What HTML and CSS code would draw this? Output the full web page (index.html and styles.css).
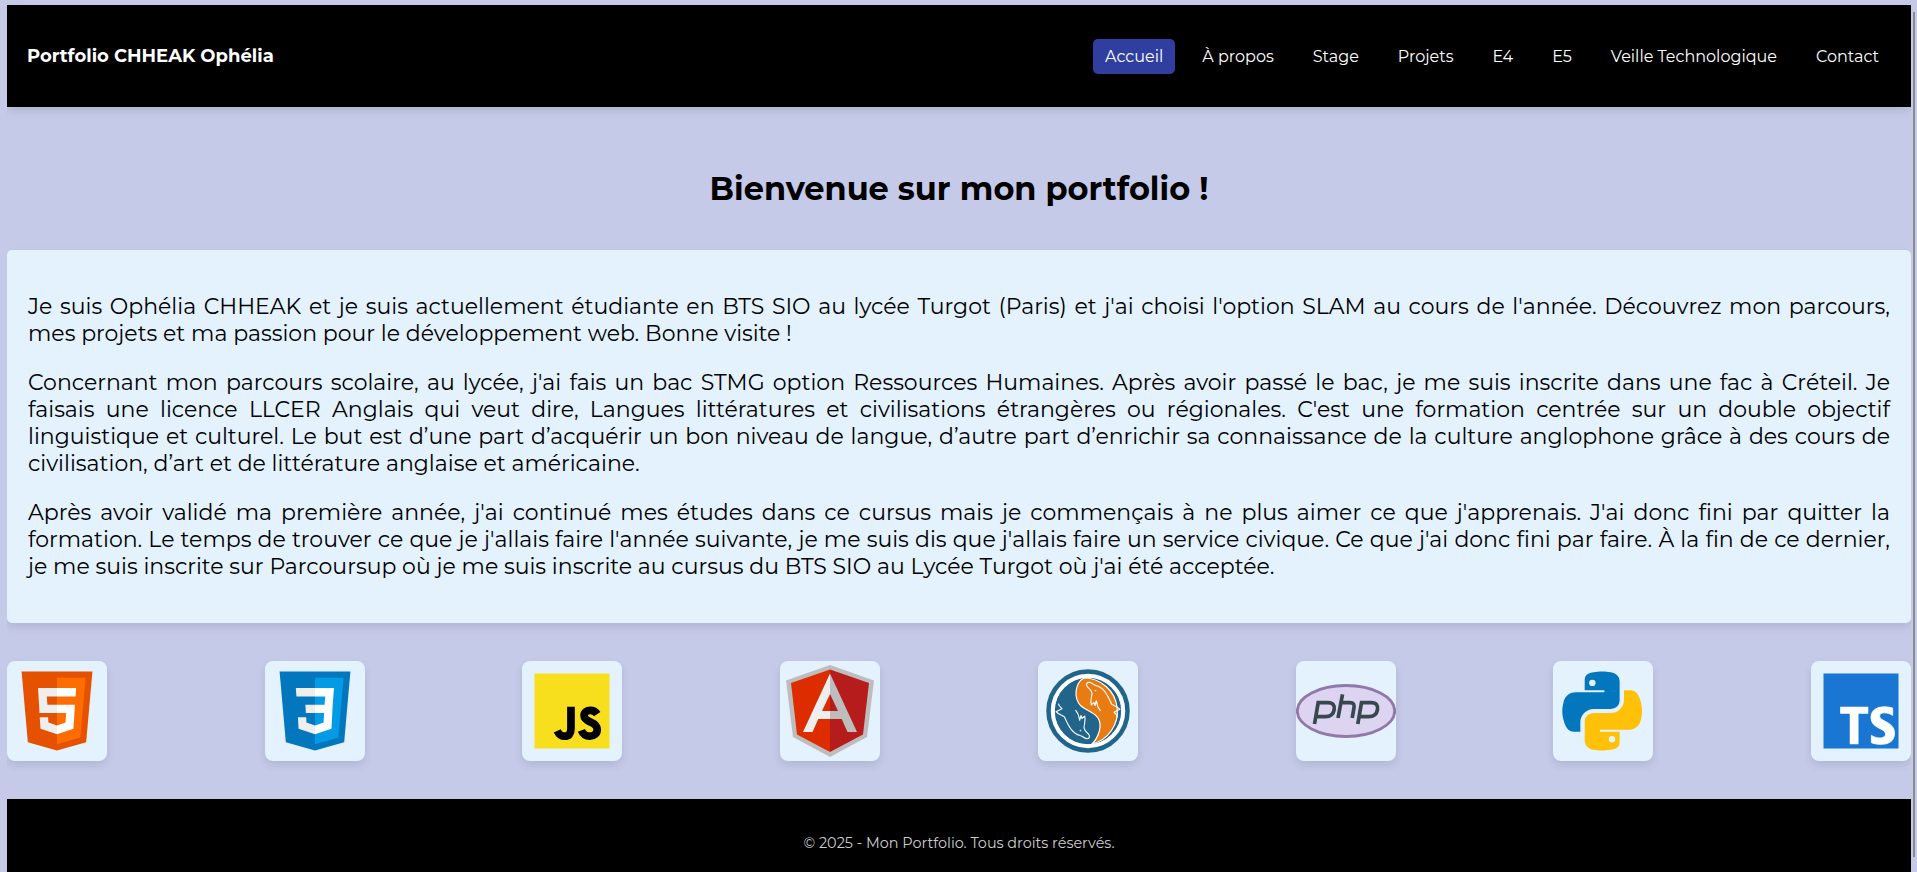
FILE: index.html
```html
<!DOCTYPE html>
<html lang="fr">
<head>
<meta charset="utf-8">
<title>Portfolio CHHEAK Ophélia</title>
<link rel="stylesheet" href="styles.css">
</head>
<body>
<header class="header">
  <div class="brand">Portfolio CHHEAK Ophélia</div>
  <nav class="nav">
    <a class="link active">Accueil</a>
    <a class="link">À propos</a>
    <a class="link">Stage</a>
    <a class="link">Projets</a>
    <a class="link">E4</a>
    <a class="link">E5</a>
    <a class="link">Veille Technologique</a>
    <a class="link">Contact</a>
  </nav>
</header>
<main>
  <h1 class="title">Bienvenue sur mon portfolio !</h1>
  <section class="intro">
    <p class="para">
      <span class="line">Je suis Ophélia CHHEAK et je suis actuellement étudiante en BTS SIO au lycée Turgot (Paris) et j'ai choisi l'option SLAM au cours de l'année. Découvrez mon parcours,</span>
      <span class="line end">mes projets et ma passion pour le développement web. Bonne visite !</span>
    </p>
    <p class="para">
      <span class="line">Concernant mon parcours scolaire, au lycée, j'ai fais un bac STMG option Ressources Humaines. Après avoir passé le bac, je me suis inscrite dans une fac à Créteil. Je</span>
      <span class="line">faisais une licence LLCER Anglais qui veut dire, Langues littératures et civilisations étrangères ou régionales. C'est une formation centrée sur un double objectif</span>
      <span class="line">linguistique et culturel. Le but est d’une part d’acquérir un bon niveau de langue, d’autre part d’enrichir sa connaissance de la culture anglophone grâce à des cours de</span>
      <span class="line end">civilisation, d’art et de littérature anglaise et américaine.</span>
    </p>
    <p class="para">
      <span class="line">Après avoir validé ma première année, j'ai continué mes études dans ce cursus mais je commençais à ne plus aimer ce que j'apprenais. J'ai donc fini par quitter la</span>
      <span class="line">formation. Le temps de trouver ce que je j'allais faire l'année suivante, je me suis dis que j'allais faire un service civique. Ce que j'ai donc fini par faire. À la fin de ce dernier,</span>
      <span class="line end">je me suis inscrite sur Parcoursup où je me suis inscrite au cursus du BTS SIO au Lycée Turgot où j'ai été acceptée.</span>
    </p>
  </section>
  <div class="skills">
    <div class="tile"><svg viewBox="0 0 48 48"><path fill="#E65100" d="M41 5H7l3 34 14 4 14-4z"/><path fill="#FF6D00" d="M24 8v31.9l11.2-3.2L37.7 8z"/><path fill="#FFF" d="M24 25v-4h8.6l-.7 11.5-7.9 2.6v-4.2l4.1-1.4.3-4.5zM32.9 17l.3-4H24v4z"/><path fill="#EEE" d="M24 30.9v4.2l-7.9-2.6L15.7 27h4l.2 2.5zM19.1 17H24v-4h-9.1l.7 12H24v-4h-4.6z"/></svg></div>
    <div class="tile"><svg viewBox="0 0 48 48"><path fill="#0277BD" d="M41 5H7l3 34 14 4 14-4z"/><path fill="#039BE5" d="M24 8v31.9l11.2-3.2L37.7 8z"/><path fill="#FFF" d="M33.1 13H24v4h4.9l-.3 4H24v4h4.4l-.3 4.5-4.1 1.4v4.2l7.9-2.6.6-11.5z"/><path fill="#EEE" d="M24 13v4h-8.9l-.3-4zM19.4 21l.2 4H24v-4zM19.8 27h-4l.3 5.5 7.9 2.6v-4.2l-4.1-1.4z"/></svg></div>
    <div class="tile"><svg viewBox="0 0 48 48"><path fill="#F7DF1E" d="M6 42V6h36v36z"/><path fill="none" stroke="#000" stroke-width="3.700" d="M23.500 22v10.500c0 2.500-1.100 3.600-2.900 3.600-1.700 0-2.900-.9-3.700-2.600M36.100 25.500c-.8-1.200-1.900-1.800-3.300-1.800-1.800 0-3 1-3 2.500 0 1.700 1.300 2.400 3.100 3.100 2.100.9 3.200 1.900 3.200 3.600 0 2-1.500 3.200-3.600 3.200-2 0-3.300-1.100-4-2.800"/></svg></div>
    <div class="tile"><svg viewBox="0 0 100 100"><path fill="#BDBDBD" d="m50 4 44 15.500-7 56.500L50 96 13 76 6 19.500z"/><path fill="#DD2C00" d="M50 8.500 11 22l6 51.500L50 91z"/><path fill="#B71C1C" d="m50 8.500 39 13.500-6 51.500L50 91z"/><path fill="#EEE" d="M50 12.500 23 71h9.500l5.800-13H50v-8h-8l8-17z"/><path fill="#BDBDBD" d="M50 12.500 77 71h-9.500l-5.800-13H50v-8h8l-8-17z"/></svg></div>
    <div class="tile"><svg viewBox="0 0 100 100"><circle cx="50" cy="50" r="39.500" fill="#fff" stroke="#21658a" stroke-width="4.500"/><circle cx="50" cy="50" r="33.500" fill="#21658a"/><path fill="#e97b13" stroke="#fff" stroke-width="1.200" d="M46 17C37 22 35 37 43 45c4 4 12 5 17 12 5 8 0 20-6 26a33.500 33.500 0 0 0-8-66z"/><circle cx="50" cy="50" r="34.500" fill="none" stroke="#fff" stroke-width="2.600"/><g fill="none" stroke="#fff" stroke-width="1.100" stroke-linejoin="round"><path d="M79.700 56.300C79 54 77.500 52.500 76 51.300l6-3C80 46 77 45 73.700 43.300 70 36 67 27 58 24.500c-3-.5-3.500-3-7-3.200-3 .2-3 2.700-1.500 4.700 2.500 2 4.500 4 4.500 7-.5 4-2 7-.7 11l2.700-2.500 1 3 1.300-4.800c.7 4.300 1.700 7.300 4.200 10.300"/><circle cx="57.500" cy="29.500" r=".3"/></g><g transform="rotate(180 50 49.500)" fill="none" stroke="#fff" stroke-width="1.100" stroke-linejoin="round"><path d="M79.700 56.300C79 54 77.500 52.500 76 51.300l6-3C80 46 77 45 73.700 43.300 70 36 67 27 58 24.500c-3-.5-3.500-3-7-3.200-3 .2-3 2.700-1.500 4.700 2.500 2 4.500 4 4.500 7-.5 4-2 7-.7 11l2.700-2.500 1 3 1.300-4.800c.7 4.300 1.700 7.300 4.200 10.300"/><circle cx="57.500" cy="29.500" r=".3"/></g></svg></div>
    <div class="tile"><svg viewBox="0 0 100 100"><ellipse cx="50" cy="50" rx="48.700" ry="25.500" fill="#DCD4F0" stroke="#9078A8" stroke-width="2.800"/><g fill="none" stroke="#37474F" stroke-width="3.700"><path d="M18.500 63 22.200 41.600H32c5 0 7 3 6.200 7-.8 4.500-4 7-8.700 7H20M42 57l4.500-23.600M45 41.600h9c3.500 0 4.600 2 4 5L56.200 57M61.800 63l3.700-21.400h9.800c5 0 7 3 6.200 7-.8 4.500-4 7-8.700 7h-9.500"/></g></svg></div>
    <div class="tile"><svg viewBox="0 0 48 48"><g transform="translate(-1.550 0) scale(1.048 1)"><path fill="#0277BD" d="M24.047 5c-1.555.005-2.633.142-3.936.367C16.273 6.033 16 7.294 16 9.820V14h9v1h-9-3.983c-2.617 0-4.943 1.537-5.660 4.500C5.536 22.900 5.500 25 6.357 28.600 6.994 31.286 8.383 34 11 34h3v-4.800C14 26.200 16.645 23 20 23h7.600C30.344 23 32 21.200 32 18.800V9.820c0-2.429-1.730-4.100-4-4.453C26.676 5.141 25.602 4.995 24.047 5zM19.500 9a1.500 1.500 0 1 1 0 3 1.500 1.500 0 0 1 0-3z"/><path fill="#FFC107" d="M23.953 43c1.555-.005 2.633-.142 3.936-.367C31.727 41.967 32 40.706 32 38.180V34h-9v-1h12.983c2.617 0 4.943-1.537 5.660-4.500.821-3.400.857-5.500 0-9.100C41.006 16.714 39.617 14 37 14h-3v4.800C34 21.800 31.355 25 28 25h-7.600C17.656 25 16 26.800 16 29.200v8.980c0 2.429 1.730 4.100 4 4.453 1.324.226 2.398.372 3.953.367zM28.500 39a1.500 1.500 0 1 1 0-3 1.500 1.500 0 0 1 0 3z"/></g></svg></div>
    <div class="tile"><svg viewBox="0 0 48 48"><path fill="#1976D2" d="M6 6h36v36H6z"/><path fill="#fff" d="M27.500 22H14v3.300h4.600V40h4.200V25.300h4.700z"/><path fill="#fff" stroke="#fff" stroke-width=".4" d="M39.200 22.600s-1.700-.6-4.100-.6c-3.200 0-6.300 1.400-6.300 5.200 0 5.200 7 5 7 7.800 0 2.400-4.200 2.500-6.800.7v3.500c1.200.5 2.700.8 4.700.8 3.600 0 6.400-1.500 6.400-5.400 0-5.500-7.200-5.600-7.200-8.100 0-2.200 3.900-2 6.300-.4z"/></svg></div>
  </div>
</main>
<footer class="footer">© 2025 - Mon Portfolio. Tous droits réservés.</footer>
<div class="scrollbar"></div>
</body>
</html>
```
FILE: styles.css
```css
* { box-sizing: border-box; }
html { background: #c5cae9; overflow: hidden; }
body {
  margin: 5px 6px 0 7px;
  height: 867px;
  overflow: visible;
  background: #c5cae9;
  color: #000;
  font-family: Montserrat, Inter, sans-serif;
}
.header {
  display: flex;
  justify-content: space-between;
  align-items: center;
  height: 102px;
  padding: 0 20px;
  background: #000;
  color: #fff;
  box-shadow: 0 4px 8px rgba(0, 0, 0, .1);
}
.brand { font-size: 18px; font-weight: 700; line-height: 22px; }
.nav { display: flex; gap: 15px; padding-top: 1px; }
.link { padding: 8px 12px; border-radius: 5px; font-size: 16px; line-height: 19px; white-space: nowrap; }
.active { background: #303f9f; }
.title { margin: 63px 0 42px; font-size: 32px; line-height: 38px; text-align: center; }
.intro {
  height: 373px;
  padding: 43px 21px 0;
  border-radius: 5px;
  background: #e3f2fd;
  box-shadow: 0 4px 8px rgba(0, 0, 0, .1);
}
.para { margin: 0 0 22px; font-size: 22px; line-height: 27px; }
.line { display: block; white-space: nowrap; text-align: justify; text-align-last: justify; }
.end { text-align-last: left; }
.skills { display: flex; justify-content: space-between; margin: 38px 0; }
.tile {
  width: 100px;
  height: 100px;
  border-radius: 8px;
  background: #e3f2fd;
  box-shadow: 0 4px 8px rgba(0, 0, 0, .1);
}
.tile svg { display: block; width: 100px; height: 100px; }
.footer { height: 73px; padding-top: 35px; background: #000; color: #ccc; font-size: 14.4px; line-height: 18px; text-align: center; }
.scrollbar { position: fixed; left: 1913px; top: 12px; width: 2px; height: 845px; background: #8b8b8b; }
```
